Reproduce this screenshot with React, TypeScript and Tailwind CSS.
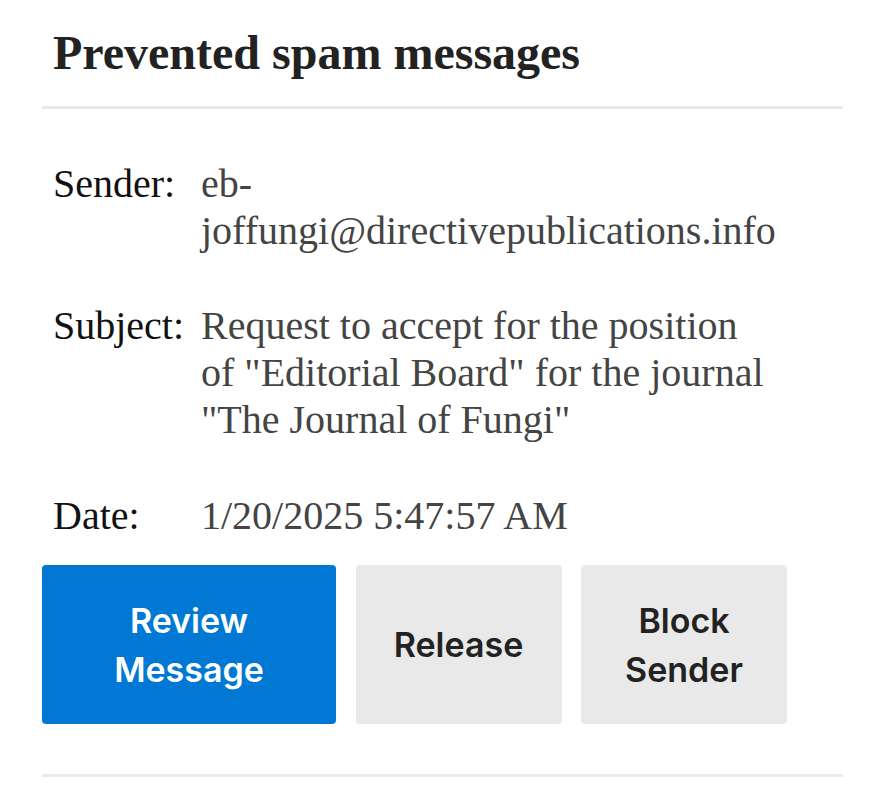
import React from "react";

const serif = { fontFamily: '"Liberation Serif", "Times New Roman", serif' };

function Row({ label, children, className }: { label: string; children: React.ReactNode; className?: string }) {
  return (
    <div className={"flex text-[40px] leading-[47px] " + (className ?? "")}>
      <div className="w-[159px] shrink-0 pl-[11px] text-[#111111]">{label}</div>
      <div className="text-[#444444]">{children}</div>
    </div>
  );
}

export default function App() {
  return (
    <div className="min-h-[793px] w-[894px] bg-white" style={serif}>
      <div className="w-[801px] ml-[42px]">
        <h1 className="pt-[25px] pl-[11px] text-[48px] font-bold leading-[56px] text-[#222222]">
          Prevented spam messages
        </h1>
        <div className="mt-[25px] h-[3px] bg-[#e8e8e8]" />

        <Row label="Sender:" className="mt-[51px]">
          <div>eb-</div>
          <div>joffungi@directivepublications.info</div>
        </Row>

        <Row label="Subject:" className="mt-[48px]">
          <div>Request to accept for the position</div>
          <div>of "Editorial Board" for the journal</div>
          <div>"The Journal of Fungi"</div>
        </Row>

        <Row label="Date:" className="mt-[49px]">
          <div>1/20/2025 5:47:57 AM</div>
        </Row>

        <div
          className="mt-[26px] flex gap-[19.5px] text-[34px] font-semibold leading-[49px]"
          style={{ fontFamily: 'Inter, "Noto Sans", sans-serif' }}
        >
          <button className="flex h-[159px] w-[294px] flex-col items-center justify-center rounded-[4px] bg-[#0078d4] text-white">
            <span>Review</span>
            <span>Message</span>
          </button>
          <button className="flex h-[159px] w-[206px] flex-col items-center justify-center rounded-[4px] bg-[#e9e9e9] text-[#222222]">
            <span>Release</span>
          </button>
          <button className="flex h-[159px] w-[206px] flex-col items-center justify-center rounded-[4px] bg-[#e9e9e9] text-[#222222]">
            <span>Block</span>
            <span>Sender</span>
          </button>
        </div>

        <div className="mt-[50px] h-[3px] bg-[#eaeaea]" />
      </div>
    </div>
  );
}
